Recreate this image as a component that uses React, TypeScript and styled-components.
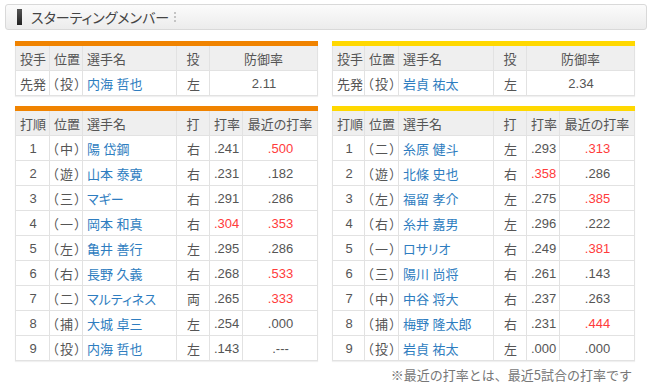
import { FC } from "react";
import styled, { createGlobalStyle } from "styled-components";

type Cell = { text: string; red?: boolean };

interface ITeam {
  color: string;
  pitcherCols: number[];
  battingCols: number[];
  pitcher: string[];
  batters: (string | Cell)[][];
}

const r = (text: string): Cell => ({ text, red: true });

const teams: ITeam[] = [
  {
    color: "#f08300",
    pitcherCols: [34, 33, 94, 33, 108],
    battingCols: [34, 33, 94, 33, 33, 75],
    pitcher: ["先発", "（投）", "内海 哲也", "左", "2.11"],
    batters: [
      ["1", "（中）", "陽 岱鋼", "右", ".241", r(".500")],
      ["2", "（遊）", "山本 泰寛", "右", ".231", ".182"],
      ["3", "（三）", "マギー", "右", ".291", ".286"],
      ["4", "（一）", "岡本 和真", "右", r(".304"), r(".353")],
      ["5", "（左）", "亀井 善行", "左", ".295", ".286"],
      ["6", "（右）", "長野 久義", "右", ".268", r(".533")],
      ["7", "（二）", "マルティネス", "両", ".265", r(".333")],
      ["8", "（捕）", "大城 卓三", "左", ".254", ".000"],
      ["9", "（投）", "内海 哲也", "左", ".143", ".---"],
    ],
  },
  {
    color: "#ffd800",
    pitcherCols: [32, 34, 95, 33, 108],
    battingCols: [32, 34, 95, 33, 33, 75],
    pitcher: ["先発", "（投）", "岩貞 祐太", "左", "2.34"],
    batters: [
      ["1", "（二）", "糸原 健斗", "左", ".293", r(".313")],
      ["2", "（遊）", "北條 史也", "右", r(".358"), ".286"],
      ["3", "（左）", "福留 孝介", "左", ".275", r(".385")],
      ["4", "（右）", "糸井 嘉男", "左", ".296", ".222"],
      ["5", "（一）", "ロサリオ", "右", ".249", r(".381")],
      ["6", "（三）", "陽川 尚将", "右", ".261", ".143"],
      ["7", "（中）", "中谷 将大", "右", ".237", ".263"],
      ["8", "（捕）", "梅野 隆太郎", "右", ".231", r(".444")],
      ["9", "（投）", "岩貞 祐太", "左", ".000", ".000"],
    ],
  },
];

const pitcherHead = ["投手", "位置", "選手名", "投", "防御率"];
const pitcherAlign = ["left", "left", "left", "center", "center"];
const battingHead = ["打順", "位置", "選手名", "打", "打率", "最近の打率"];
const battingAlign = ["center", "left", "left", "center", "center", "center"];

const toCell = (c: string | Cell): Cell => (typeof c === "string" ? { text: c } : c);

const LineupTable: FC<{
  color: string;
  cols: number[];
  head: string[];
  align: string[];
  rows: (string | Cell)[][];
  headAlign?: string[];
}> = ({ color, cols, head, align, rows, headAlign }) => (
  <Table $color={color}>
    <colgroup>
      {cols.map((w, i) => (
        <col key={i} style={{ width: w }} />
      ))}
    </colgroup>
    <thead>
      <tr>
        {head.map((h, i) => (
          <Th key={i} $align={(headAlign || align)[i]}>
            {h}
          </Th>
        ))}
      </tr>
    </thead>
    <tbody>
      {rows.map((row, ri) => (
        <tr key={ri}>
          {row.map((c, ci) => {
            const cell = toCell(c);
            return (
              <Td
                key={ci}
                $align={align[ci]}
                $red={cell.red}
                $name={ci === 2}
                $pos={ci === 1}
              >
                {cell.text}
              </Td>
            );
          })}
        </tr>
      ))}
    </tbody>
  </Table>
);

const App: FC = () => (
  <>
    <GlobalStyle />
    <Page>
      <TitleBar>
        <Mark />
        <Title>スターティングメンバー</Title>
        <Dots />
      </TitleBar>
      <Teams>
        {teams.map((t, i) => (
          <Column key={i}>
            <LineupTable
              color={t.color}
              cols={t.pitcherCols}
              head={pitcherHead}
              align={pitcherAlign}
              rows={[t.pitcher]}
            />
            <LineupTable
              color={t.color}
              cols={t.battingCols}
              head={battingHead}
              align={battingAlign}
              headAlign={["left", "left", "left", "center", "center", "center"]}
              rows={t.batters}
            />
          </Column>
        ))}
      </Teams>
      <Note>※最近の打率とは、最近5試合の打率です</Note>
    </Page>
  </>
);

const GlobalStyle = createGlobalStyle`
  body {
    margin: 0;
    background: #fff;
    font-family: "Liberation Sans", "Noto Sans CJK JP", sans-serif;
    color: #555;
  }
`;

const Page = styled.div`
  width: 650px;
  height: 390px;
  padding-top: 4px;
  box-sizing: border-box;
`;

const TitleBar = styled.div`
  margin: 0 3px 0 5px;
  height: 26px;
  box-sizing: border-box;
  border: 1px solid #d9d9d9;
  border-radius: 3px;
  background: linear-gradient(#fbfbfb, #ececec);
  display: flex;
  align-items: center;
  padding-left: 11px;
`;

const Mark = styled.span`
  width: 5px;
  height: 16px;
  background: linear-gradient(#555, #222);
`;

const Title = styled.span`
  margin-left: 9px;
  font-family: "Noto Sans CJK JP", sans-serif;
  font-size: 14px;
  font-feature-settings: "palt";
  color: #444;
`;

const Dots = styled.span`
  margin-left: 5px;
  height: 10px;
  border-left: 2px dotted #c4c4c4;
`;

const Teams = styled.div`
  display: grid;
  grid-template-columns: 302px 302px;
  column-gap: 15px;
  padding: 11px 16px 0 15px;
`;

const Column = styled.div`
  display: flex;
  flex-direction: column;
  gap: 10px;
`;

const Table = styled.table<{ $color: string }>`
  width: 302px;
  table-layout: fixed;
  border-collapse: collapse;
  border-top: 5px solid ${(p) => p.$color};
  font-size: 13px;
  font-family: "Liberation Sans", "Noto Sans CJK JP", sans-serif;
  font-feature-settings: "palt";
  box-shadow: 0 1px 1px rgba(0, 0, 0, 0.06);
`;

const Th = styled.th<{ $align: string }>`
  height: 24px;
  padding: 0 4px;
  background: #efefef;
  border: 1px solid #e2e2e2;
  border-top: none;
  font-weight: normal;
  text-align: ${(p) => p.$align};
  color: #555;
  white-space: nowrap;
  overflow: hidden;
`;

const Td = styled.td<{ $align: string; $red?: boolean; $name?: boolean; $pos?: boolean }>`
  height: 24px;
  padding: 0 3px 0 ${(p) => (p.$pos ? 2 : 4)}px;
  border: 1px solid #e2e2e2;
  text-align: ${(p) => p.$align};
  letter-spacing: ${(p) => (p.$pos ? "1.5px" : "normal")};
  color: ${(p) => (p.$red ? "#ff3b3b" : p.$name ? "#2e7dc0" : "#555")};
  white-space: nowrap;
  overflow: hidden;
`;

const Note = styled.div`
  margin: 4px 18px 0 0;
  text-align: right;
  font-family: "Noto Sans CJK JP", sans-serif;
  font-size: 13px;
  color: #777;
`;

export default App;
